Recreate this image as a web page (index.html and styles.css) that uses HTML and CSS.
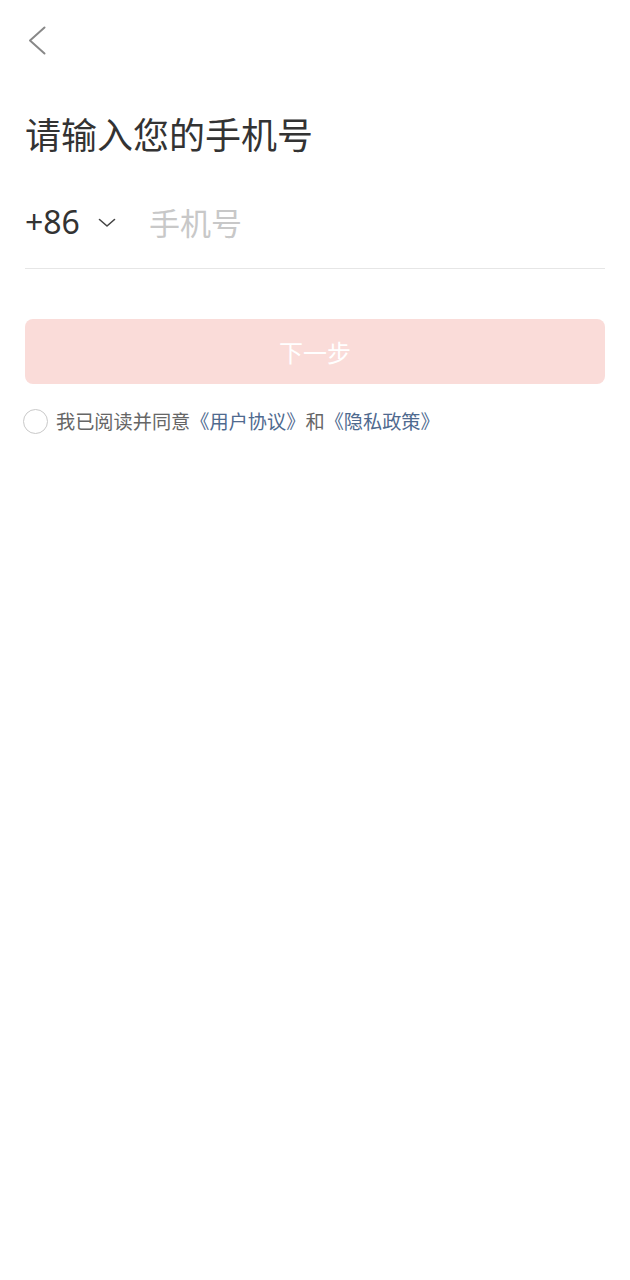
FILE: index.html
```html
<!DOCTYPE html>
<html lang="zh-CN">
<head>
<meta charset="utf-8">
<title>登录</title>
<link rel="stylesheet" href="styles.css">
</head>
<body>
<div class="page">
  <div class="header">
    <svg class="back" width="30" height="30" viewBox="0 0 30 30">
      <polyline points="19.5,2.5 5,15.5 19.5,28.5" fill="none" stroke="#888" stroke-width="2" stroke-linecap="round" stroke-linejoin="round"/>
    </svg>
  </div>
  <h1 class="title">请输入您的手机号</h1>
  <div class="phone-row">
    <span class="code">+86</span>
    <svg class="caret" width="18" height="10" viewBox="0 0 18 10">
      <polyline points="1.5,1.5 9,8 16.5,1.5" fill="none" stroke="#444" stroke-width="1.6" stroke-linecap="round" stroke-linejoin="round"/>
    </svg>
    <span class="placeholder">手机号</span>
  </div>
  <button class="next">下一步</button>
  <div class="agree">
    <span class="radio"></span>
    <span class="agree-text">我已阅读并同意<span class="link">《用户协议》</span>和<span class="link">《隐私政策》</span></span>
  </div>
</div>
</body>
</html>
```

FILE: styles.css
```css
html, body {
  margin: 0;
  padding: 0;
  background: #fff;
}
body {
  font-family: "Noto Sans", "Noto Sans CJK SC", sans-serif;
  color: #333;
}
.page {
  padding: 0 25px;
}
.header {
  height: 80px;
  display: flex;
  align-items: center;
}
.back {
  display: block;
  margin-left: 0;
}
.title {
  margin: 28px 0 0;
  font-family: "Noto Sans CJK SC", sans-serif;
  font-weight: 400;
  font-size: 36px;
  line-height: 50px;
  height: 50px;
  color: #333;
}
.phone-row {
  margin-top: 36px;
  height: 56px;
  padding-bottom: 18px;
  border-bottom: 1px solid #e6e6e6;
  display: flex;
  align-items: center;
}
.code {
  font-family: "Noto Sans", sans-serif;
  font-size: 32px;
  line-height: 56px;
  color: #333;
}
.caret {
  display: block;
  margin-left: 18px;
  margin-top: 2px;
}
.placeholder {
  margin-left: 33px;
  font-family: "Noto Sans CJK SC", sans-serif;
  font-size: 31px;
  line-height: 56px;
  color: #c8c8c8;
}
.next {
  display: block;
  width: 100%;
  height: 65px;
  margin-top: 50px;
  border: none;
  border-radius: 8px;
  background: #fadcd9;
  color: #fff;
  font-family: "Noto Sans CJK SC", sans-serif;
  font-size: 24px;
  padding: 0;
}
.agree {
  margin-top: 24px;
  height: 27px;
  display: flex;
  align-items: center;
}
.radio {
  box-sizing: border-box;
  width: 25px;
  height: 25px;
  margin-left: -2px;
  border: 1.5px solid #c9c9c9;
  border-radius: 50%;
  flex: none;
}
.agree-text {
  margin-left: 8px;
  font-family: "Noto Sans CJK SC", sans-serif;
  font-size: 19.2px;
  line-height: 27px;
  color: #666;
  white-space: nowrap;
}
.link {
  color: #4f6a8f;
}
```
